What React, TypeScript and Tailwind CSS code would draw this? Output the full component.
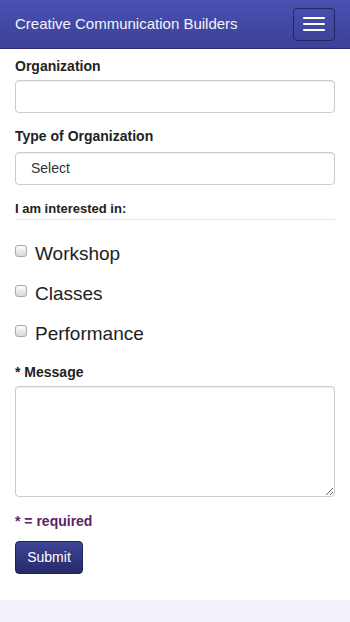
export default function App() {
    return (
        <div className="min-h-[622px] bg-white font-['Liberation_Sans',Arial,sans-serif] text-[#333]">
            {/* top bar */}
            <header className="flex h-[49px] items-center justify-between border-b border-[#2b2e72] bg-linear-to-b from-[#4b51b1] to-[#3b4098] px-[15px]">
                <span className="text-[15px] text-[#f4f4f8]">
                    Creative Communication Builders
                </span>
                <button className="flex h-[33px] w-[42px] flex-col items-center justify-center gap-[4px] rounded-[4px] border border-[#23265f]">
                    <span className="h-[2px] w-[22px] rounded-[1px] bg-white" />
                    <span className="h-[2px] w-[22px] rounded-[1px] bg-white" />
                    <span className="h-[2px] w-[22px] rounded-[1px] bg-white" />
                </button>
            </header>

            <form className="px-[15px] pt-[7px]">
                <label className="block text-[14px] font-bold leading-[20px] text-[#222]">
                    Organization
                </label>
                <input
                    type="text"
                    className="mt-[4px] block h-[33px] w-full rounded-[4px] border border-[#cccccc] px-[12px] text-[14px] shadow-[inset_0_1px_1px_rgba(0,0,0,0.075)] outline-none"
                />

                <label className="mt-[13px] block text-[14px] font-bold leading-[20px] text-[#222]">
                    Type of Organization
                </label>
                <select className="mt-[6px] block h-[33px] w-full appearance-none rounded-[4px] border border-[#cccccc] bg-white px-[15px] text-[14px] text-[#333] shadow-[inset_0_1px_1px_rgba(0,0,0,0.075)] outline-none">
                    <option>Select</option>
                </select>

                <div className="mt-[16px] border-b border-[#e5e5e5] pb-[2px] text-[13px] font-bold leading-[16px] text-[#222]">
                    I am interested in:
                </div>

                <div className="mt-[22px] flex flex-col gap-[16px]">
                    {["Workshop", "Classes", "Performance"].map((item) => (
                        <label key={item} className="flex items-start">
                            <input
                                type="checkbox"
                                className="mt-[3px] h-[12px] w-[12px] appearance-none rounded-[3px] border border-[#aaaaaa] bg-linear-to-b from-[#fefefe] to-[#d6d6d6]"
                            />
                            <span className="ml-[8px] text-[19px] leading-[24px] text-[#222]">
                                {item}
                            </span>
                        </label>
                    ))}
                </div>

                <label className="mt-[16px] block text-[14px] font-bold leading-[20px] text-[#222]">
                    * Message
                </label>
                <textarea className="mt-[4px] block h-[111px] w-full rounded-[4px] border border-[#cccccc] px-[12px] py-[6px] text-[14px] shadow-[inset_0_1px_1px_rgba(0,0,0,0.075)] outline-none" />

                <p className="mt-[14px] text-[14px] font-bold leading-[20px] text-[#5b2368]">
                    * = required
                </p>

                <button
                    type="button"
                    className="mt-[10px] h-[33px] w-[68px] rounded-[4px] border border-[#1f2257] bg-linear-to-b from-[#3f4597] to-[#272a6a] text-[14px] text-white"
                >
                    Submit
                </button>
            </form>

            <footer className="mt-[26px] h-[40px] bg-[#f3f0fc]" />
        </div>
    );
}
